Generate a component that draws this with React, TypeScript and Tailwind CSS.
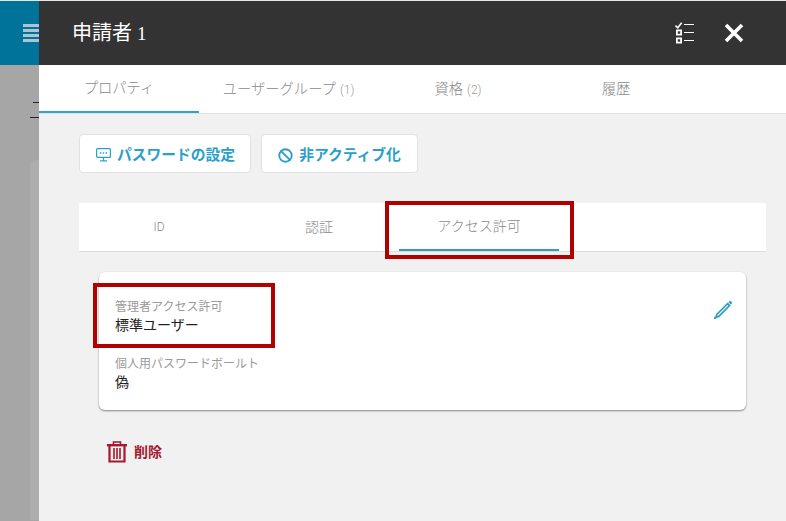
import { Ban } from 'lucide-react';

// Checklist icon in the header
function ChecklistIcon() {
    return (
        <svg width="20" height="22" viewBox="0 0 20 22" fill="none" stroke="#fff" strokeWidth="1.2">
            <path d="M0.5 3.5l2.2 2.2 4-5" strokeWidth="1.6" />
            <path d="M9 2.5h10M9 10.5h10M9 18.5h10" />
            <rect x="1.9" y="8.4" width="4.2" height="4.2" strokeWidth="1.8" />
            <rect x="1.9" y="16.4" width="4.2" height="4.2" strokeWidth="1.8" />
        </svg>
    );
}

function CloseIcon() {
    return (
        <svg width="20" height="20" viewBox="0 0 20 20" fill="none" stroke="#fff" strokeWidth="3.6">
            <path d="M2 2l16 16M18 2L2 18" />
        </svg>
    );
}

function MonitorIcon() {
    return (
        <svg width="15" height="14" viewBox="0 0 15 14" fill="none" stroke="#2b9fc9" strokeWidth="1.2">
            <rect x="0.6" y="0.6" width="13.8" height="8.8" rx="1" />
            <path d="M7.5 9.5v3M4 12.9h7" />
            <path d="M4 5h1.4M6.8 5h1.4M9.6 5H11" strokeWidth="1.4" />
        </svg>
    );
}

function PencilIcon() {
    return (
        <svg width="20" height="20" viewBox="0 0 20 20" fill="none" className="mt-[2px]">
            <path d="M14.6 3.6l2 2L5.8 16.4l-2.8.8.8-2.8z" stroke="#2b9fc9" strokeWidth="1.7" />
            <path d="M15.4 2.2l1-1a1 1 0 0 1 1.4 0l1 1a1 1 0 0 1 0 1.4l-1 1z" fill="#2b9fc9" />
            <path d="M.8 19.2l.8-3 2.2 2.2z" fill="#2b9fc9" />
        </svg>
    );
}

function TrashIcon() {
    return (
        <svg width="20" height="22" viewBox="0 0 20 22" fill="none" stroke="#a5182f">
            <path d="M0 4.2h20" strokeWidth="2.4" />
            <path d="M6.5 3V1h7v2" strokeWidth="1.6" />
            <path d="M2.5 5v15.5h15V5" strokeWidth="2.2" />
            <path d="M7 7v11M10 7v11M13 7v11" strokeWidth="1.6" />
        </svg>
    );
}

const drawerTabs = [
    { label: 'プロパティ', width: 'w-[160px]', active: true },
    { label: 'ユーザーグループ', count: '(1)', width: 'w-[179px]' },
    { label: '資格', count: '(2)', width: 'w-[160px]' },
    { label: '履歴', width: 'w-[156px]' },
];

const innerTabs = [
    { label: 'ID', active: false },
    { label: '認証', active: false },
    { label: 'アクセス許可', active: true },
];

export default function App() {
    return (
        <div className='relative h-[521px] w-[786px] overflow-hidden bg-[#a6a6a6] font-["Roboto","Noto_Sans_CJK_JP",sans-serif]'>
            {/* Page behind the drawer */}
            <div className="flex h-[65px] items-center border-t border-[#e6e6e6] bg-[#00739a] pl-[23px]">
                <div className="flex w-4 flex-col gap-[2px]">
                    <div className="h-[3px] bg-[#a9c6d2]" />
                    <div className="h-[3px] bg-[#a9c6d2]" />
                    <div className="h-[3px] bg-[#a9c6d2]" />
                    <div className="h-[3px] bg-[#a9c6d2]" />
                </div>
            </div>
            <div className="ml-[33px] mt-[37px] h-px w-[6px] bg-[#222]" />
            <div className="ml-[30px] mt-[14px] h-px w-[9px] bg-[#222]" />
            <div className="ml-[30px] mt-[42px] h-[360px] rounded-tl-md bg-[#adadad]" />

            {/* Drawer */}
            <div className="absolute inset-y-0 left-[39px] right-0 flex flex-col bg-[#f1f1f1]">
                <div className="flex h-[65px] shrink-0 items-center justify-between border-t border-[#e6e6e6] bg-[#333] pl-[33px] pr-[42px]">
                    <h1 className="text-[20px] leading-none text-white">
                        <span>申請者</span>{' '}
                        <span className='font-["Liberation_Serif",serif] text-[19px]'>1</span>
                    </h1>
                    <div className="flex items-center gap-[29px]">
                        <ChecklistIcon />
                        <CloseIcon />
                    </div>
                </div>

                <div className="flex h-[49px] shrink-0 border-b border-[#e2e2e2] bg-white">
                    {drawerTabs.map((tab) => (
                        <div
                            key={tab.label}
                            className={`flex h-[48px] items-center justify-center pt-[1px] text-[14.3px] font-light text-[#8a8a8a] ${tab.width} ${tab.active ? 'border-b-2 border-[#2ea6c6]' : ''}`}
                        >
                            {tab.label}
                            {tab.count && <span className="ml-1 text-[12px] text-[#9a9a9a]">{tab.count}</span>}
                        </div>
                    ))}
                </div>

                <div className="flex flex-col pl-[40px] pr-[20px] pt-[20px]">
                    <div className="flex gap-[10px]">
                        <button className="flex h-[39px] w-[172px] items-center justify-center gap-[6px] rounded border border-[#e2e2e2] bg-white pl-[1px] pt-[3px] text-[14.75px] font-bold text-[#2b9fc9]">
                            <MonitorIcon />
                            パスワードの設定
                        </button>
                        <button className="flex h-[39px] w-[157px] items-center justify-center gap-[6px] rounded border border-[#e2e2e2] bg-white pt-[3px] text-[14.75px] font-bold text-[#2b9fc9]">
                            <Ban size={15} strokeWidth={3} />
                            非アクティブ化
                        </button>
                    </div>

                    <div className="mt-[30px] flex h-[49px] border-b border-[#dddddd] bg-white">
                        {innerTabs.map((tab) => (
                            <div
                                key={tab.label}
                                className={`flex h-[48px] w-[160px] items-center justify-center font-light text-[#8a8a8a] ${tab.label === 'ID' ? 'text-[12px]' : 'text-[14px]'} ${tab.active ? 'border-b-2 border-[#2ba0bb]' : ''}`}
                            >
                                {tab.label}
                            </div>
                        ))}
                    </div>

                    <div className="mx-[20px] mt-[20px] flex h-[138px] justify-between rounded-md bg-white pl-[16px] pr-[13px] pt-[26px] shadow-[0_1px_2px_rgba(0,0,0,0.45)]">
                        <dl className="pt-[1px]">
                            <dt className="text-[12px] leading-[16px] text-[#9a9a9a]">管理者アクセス許可</dt>
                            <dd className="text-[14px] leading-[20px] text-[#222]">標準ユーザー</dd>
                            <dt className="mt-[21px] text-[12px] leading-[16px] text-[#9a9a9a]">個人用パスワードボールト</dt>
                            <dd className="text-[14px] leading-[20px] text-[#222]">偽</dd>
                        </dl>
                        <PencilIcon />
                    </div>

                    <div className="ml-[28px] mt-[31px] flex items-center gap-[7px] text-[14px] font-bold text-[#a5182f]">
                        <TrashIcon />
                        削除
                    </div>
                </div>
            </div>

            {/* Red annotation boxes */}
            <div className="absolute left-[385px] top-[201px] h-[58px] w-[189px] border-4 border-[#b00000]" />
            <div className="absolute left-[93px] top-[283px] h-[65px] w-[182px] border-4 border-[#b00000]" />
        </div>
    );
}
